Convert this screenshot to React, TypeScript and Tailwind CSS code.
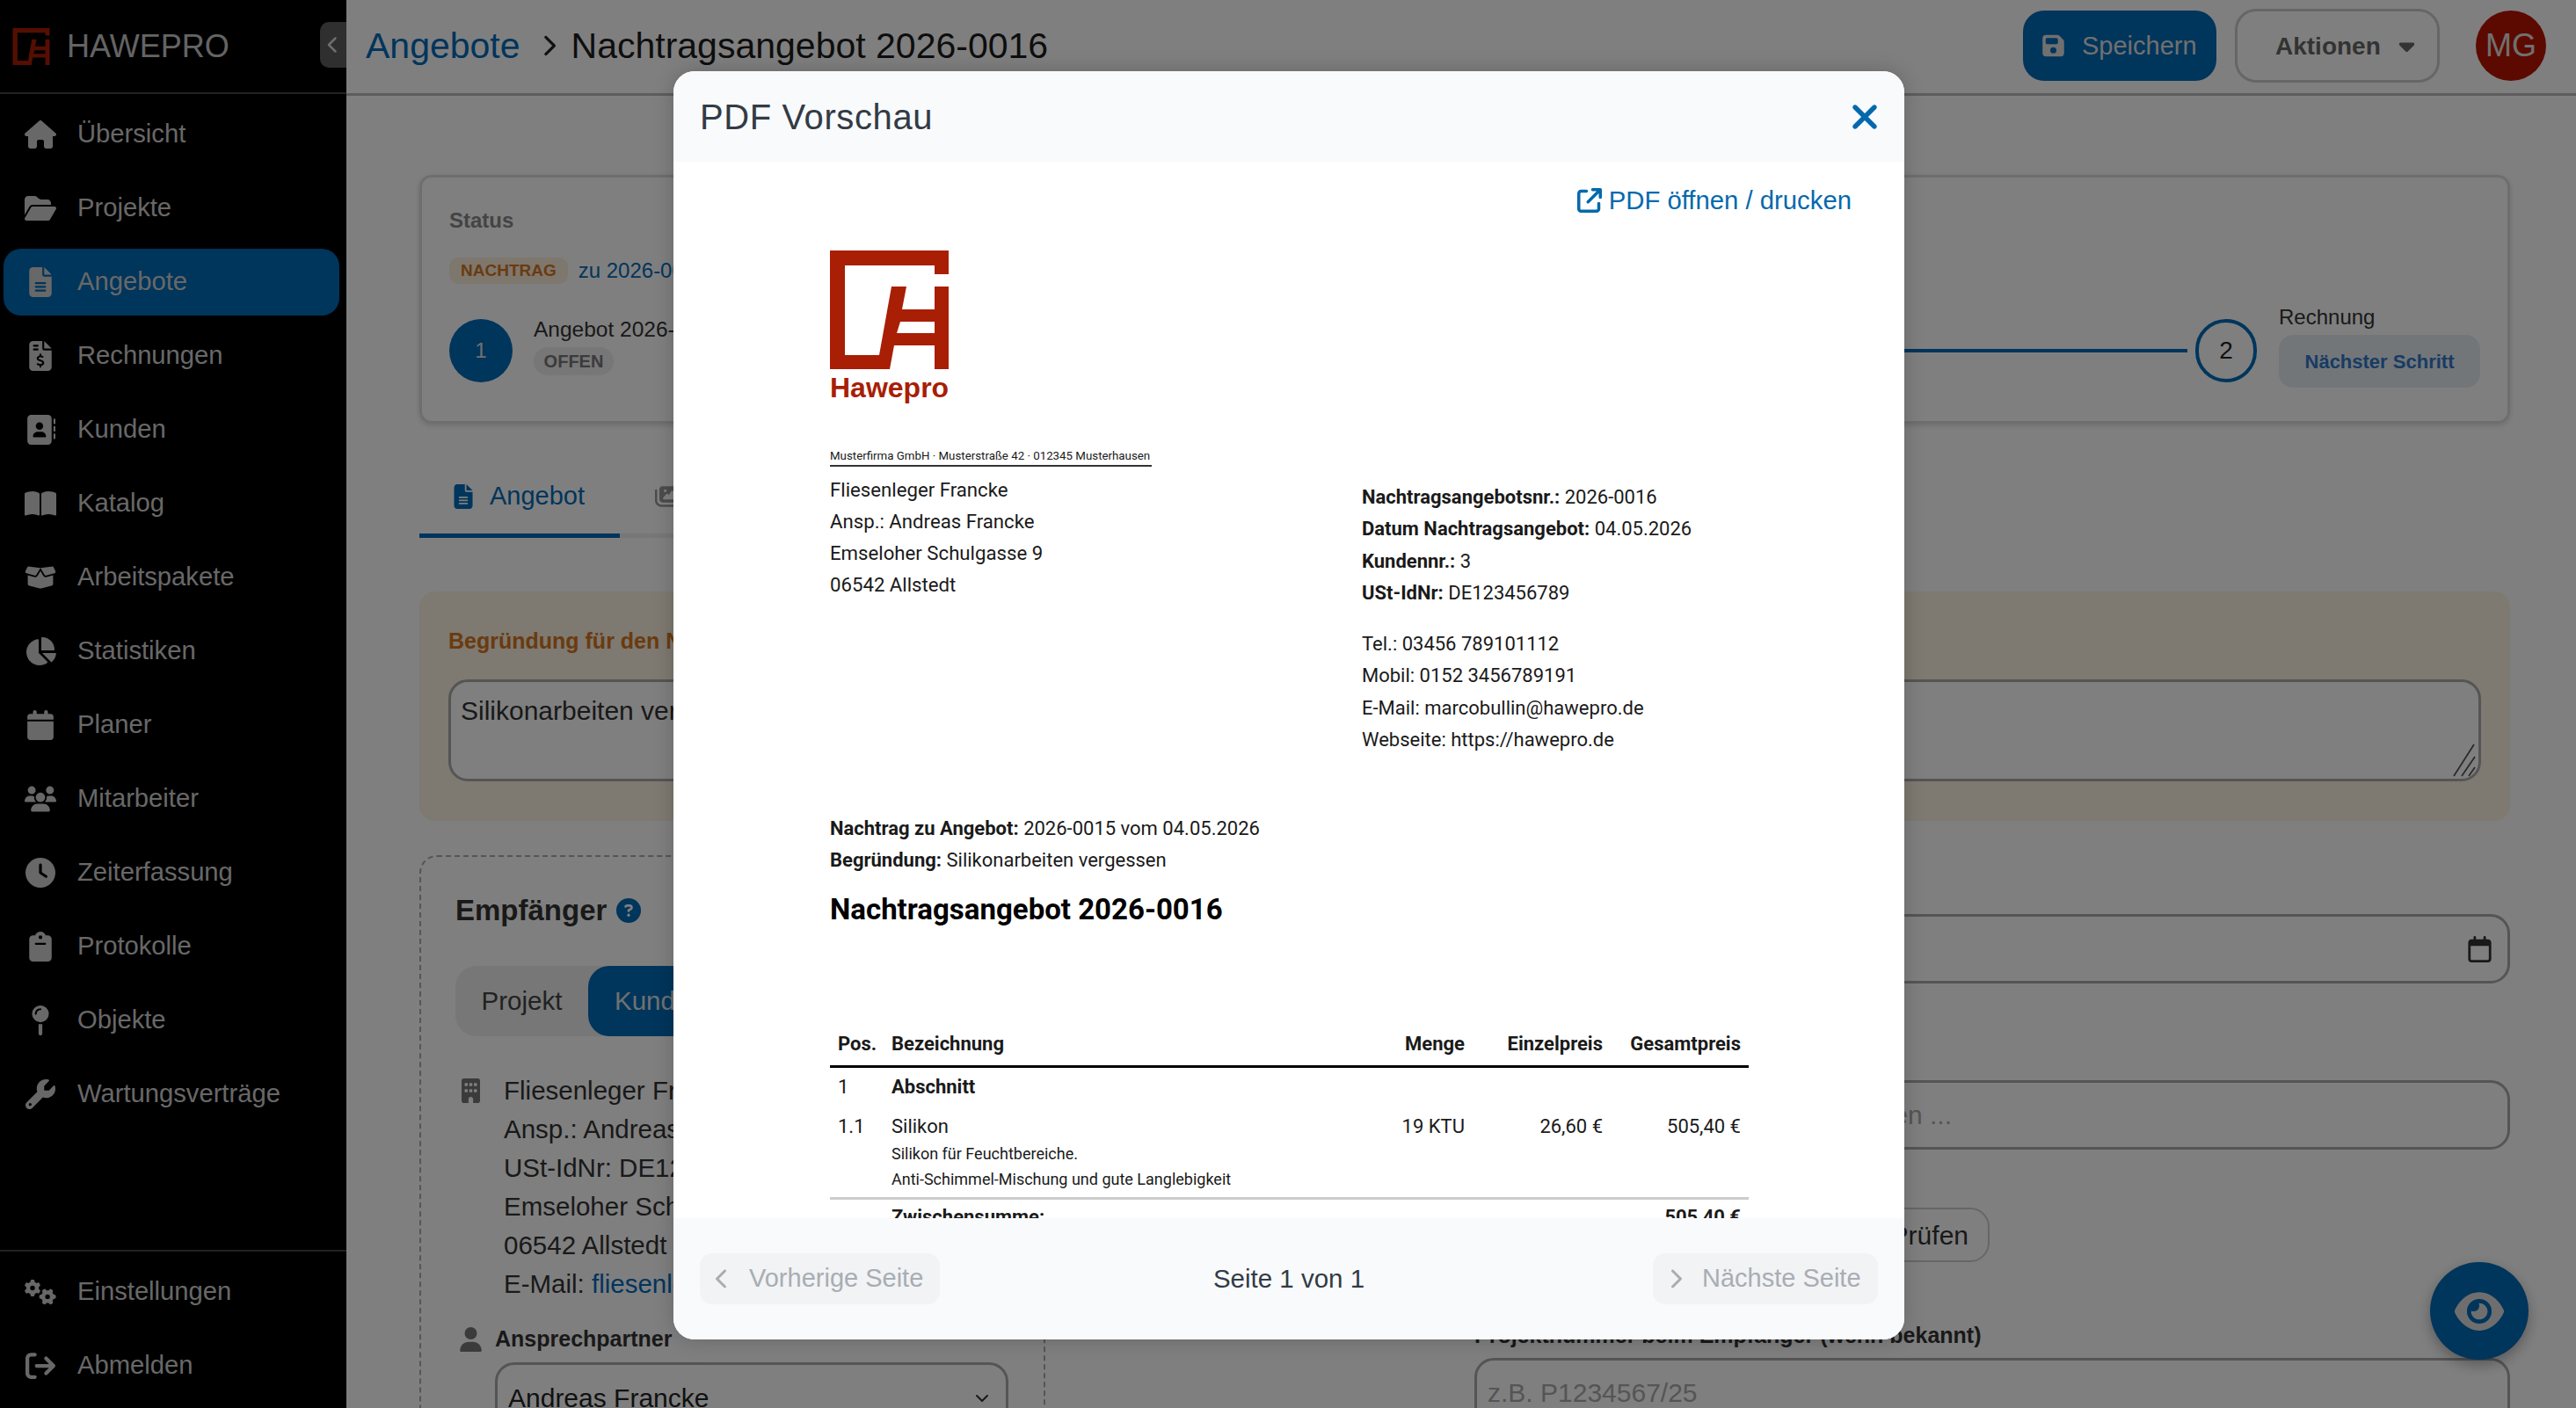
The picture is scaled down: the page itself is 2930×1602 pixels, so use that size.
import React from 'react';
import {
  FaHouse, FaFolderOpen, FaFileLines, FaFileInvoiceDollar, FaAddressBook, FaBookOpen, FaBoxOpen,
  FaChartPie, FaCalendar, FaUsers, FaClock, FaClipboard, FaMapPin, FaWrench, FaGears,
  FaArrowRightFromBracket, FaFloppyDisk, FaCaretDown, FaEye, FaBuilding, FaUser, FaXmark,
  FaCircleQuestion, FaChevronLeft, FaChevronRight, FaChevronDown, FaImages, FaRegCalendar,
  FaArrowUpRightFromSquare,
} from 'react-icons/fa6';

const mainNav = [
  { label: 'Übersicht', icon: FaHouse },
  { label: 'Projekte', icon: FaFolderOpen },
  { label: 'Angebote', icon: FaFileLines, active: true },
  { label: 'Rechnungen', icon: FaFileInvoiceDollar },
  { label: 'Kunden', icon: FaAddressBook },
  { label: 'Katalog', icon: FaBookOpen },
  { label: 'Arbeitspakete', icon: FaBoxOpen },
  { label: 'Statistiken', icon: FaChartPie },
  { label: 'Planer', icon: FaCalendar },
  { label: 'Mitarbeiter', icon: FaUsers },
  { label: 'Zeiterfassung', icon: FaClock },
  { label: 'Protokolle', icon: FaClipboard },
  { label: 'Objekte', icon: FaMapPin },
  { label: 'Wartungsverträge', icon: FaWrench },
];

const bottomNav = [
  { label: 'Einstellungen', icon: FaGears },
  { label: 'Abmelden', icon: FaArrowRightFromBracket },
];

const Logo = ({ className }: { className: string }) => (
  <svg viewBox="0 0 135 135" className={className}>
    <path
      fill="#a81f05"
      fillRule="evenodd"
      d="M0 0H135V27H119V17H17V119H56L70 41H87L82 67H119V41H135V135H119V108H73L68 135H0ZM80 81H119V94H76Z"
    />
  </svg>
);

const NavItem = ({ label, icon: Icon, active }: { label: string; icon: React.ElementType; active?: boolean }) => (
  <div className={`ml-[4px] mr-[8px] flex h-[76px] items-center rounded-[20px] pl-[24px] ${active ? 'bg-[#006ab8]' : ''}`}>
    <span className="flex w-[36px] justify-center text-[#d0d0d0]">
      <Icon className="h-[34px] w-[36px]" />
    </span>
    <span className="ml-[24px] text-[29.2px] text-[#d0d0d0]">{label}</span>
  </div>
);

const Sidebar = () => (
  <aside className="flex h-[1602px] w-[394px] shrink-0 flex-col bg-black">
    <div className="relative flex h-[107px] shrink-0 items-center border-b-2 border-[#444] pl-[14px]">
      <Logo className="h-[42px] w-[43px]" />
      <span className="ml-[19px] text-[36px] text-[#c8c8c8]">HAWEPRO</span>
      <div className="absolute right-0 top-[25px] flex h-[52px] w-[30px] items-center justify-center rounded-l-[10px] bg-[#5e5e5e] text-[#ddd]">
        <FaChevronLeft className="h-[20px] w-[14px]" />
      </div>
    </div>
    <nav className="flex flex-col gap-[8px] pt-[8px]">
      {mainNav.map((item) => (
        <NavItem key={item.label} {...item} />
      ))}
    </nav>
    <div className="mt-auto flex flex-col gap-[8px] border-t-2 border-[#444] pb-[10px] pt-[8px]">
      {bottomNav.map((item) => (
        <NavItem key={item.label} {...item} />
      ))}
    </div>
  </aside>
);

const TopBar = () => (
  <header className="flex h-[109px] shrink-0 items-center border-b-[3px] border-[#bbb] pb-[2px] pl-[22px] pr-[34px]">
    <span className="mt-[2px] text-[41px] text-[#006ab8]">Angebote</span>
    <FaChevronRight className="ml-[24px] h-[26px] w-[16px] text-[#222]" />
    <span className="ml-[18px] mt-[2px] text-[41px] text-[#1c1c1c]">Nachtragsangebot 2026-0016</span>
    <div className="ml-auto flex h-[80px] w-[220px] items-center rounded-[24px] bg-[#006ab8] pl-[22px] text-[#e0e0e0]">
      <FaFloppyDisk className="h-[28px] w-[25px]" />
      <span className="ml-[20px] mt-[2px] text-[29px]">Speichern</span>
    </div>
    <div className="ml-[21px] flex h-[84px] w-[233px] items-center rounded-[24px] border-[3px] border-[#ccc] pl-[43px] text-[#666]">
      <span className="mt-[2px] text-[28px] font-bold">Aktionen</span>
      <FaCaretDown className="ml-[17px] h-[28px] w-[25px]" />
    </div>
    <div className="ml-[41px] flex h-[80px] w-[80px] items-center justify-center rounded-full bg-[#b81400] text-[36px] text-[#e0e0e0]">
      MG
    </div>
  </header>
);

const StatusCard = () => (
  <section className="flex h-[283px] flex-col rounded-[14px] border-[3px] border-[#ddd] px-[31px] pt-[34px] shadow-[0_2px_6px_rgba(0,0,0,0.15)]">
    <div className="text-[24px] font-bold leading-[30px] text-[#888]">Status</div>
    <div className="mt-[27px] flex h-[30px] items-center">
      <span className="flex h-[30px] items-center rounded-[10px] bg-[#fdeedd] px-[13px] text-[19px] font-bold text-[#d4761f]">NACHTRAG</span>
      <span className="ml-[12px] text-[24px] text-[#006ab8]">zu 2026-0015</span>
    </div>
    <div className="mt-[40px] flex h-[72px] items-start">
      <div className="flex h-[72px] w-[72px] items-center justify-center rounded-full bg-[#006ab8] text-[24px] text-[#e0e0e0]">1</div>
      <div className="ml-[24px] -mt-[3px]">
        <div className="text-[24.5px] leading-[30px] text-[#333]">Angebot 2026-0015</div>
        <span className="mt-[5px] flex h-[32px] w-[91px] items-center justify-center rounded-full bg-[#eee] text-[20px] font-bold text-[#777]">OFFEN</span>
      </div>
      <div className="ml-[24px] mt-[34px] h-[4px] flex-1 bg-[#006ab8]" />
      <div className="ml-[9px] flex h-[72px] w-[70px] items-center justify-center rounded-full border-[4px] border-[#006ab8] text-[28px] text-[#222]">2</div>
      <div className="ml-[25px] -mt-[20px] w-[229px]">
        <div className="text-[24px] leading-[36px] text-[#333]">Rechnung</div>
        <span className="mt-[2px] flex h-[60px] items-center justify-center rounded-[16px] bg-[#e6ecf2] text-[22px] font-bold text-[#2f78c8]">Nächster Schritt</span>
      </div>
    </div>
  </section>
);

const Tabs = () => (
  <div className="mt-[38px] flex h-[92px] w-[1400px] border-b-[5px] border-[#eee]">
    <div className="-mb-[5px] flex w-[228px] items-center border-b-[5px] border-[#006ab8] pl-[39px] pt-[3px] text-[#006ab8]">
      <FaFileLines className="h-[28px] w-[22px]" />
      <span className="ml-[19px] text-[29px]">Angebot</span>
    </div>
    <div className="flex items-center pl-[40px] pt-[3px] text-[#999]">
      <FaImages className="h-[28px] w-[30px]" />
      <span className="ml-[16px] text-[29px]">Bilder</span>
    </div>
  </div>
);

const ReasonPanel = () => (
  <section className="mt-[61px] h-[261px] rounded-[18px] bg-[#fcf2e2] px-[33px] pt-[41px]">
    <div className="text-[25px] font-bold leading-[30px] text-[#d4761f]">Begründung für den Nachtrag</div>
    <div className="relative mt-[29px] h-[116px] rounded-[22px] border-[3px] border-[#aaa] bg-white px-[11px] pt-[15px] text-[30px] leading-[36px] text-[#333]">
      Silikonarbeiten vergessen
      <svg viewBox="0 0 28 40" className="absolute bottom-[1px] right-[2px] h-[40px] w-[28px] text-[#555]">
        <path d="M25 2 2 38M26 16 11 38M26 28 19 38" stroke="currentColor" strokeWidth="1.8" fill="none" />
      </svg>
    </div>
  </section>
);

const RecipientCard = () => (
  <section className="h-[700px] rounded-[20px] border-2 border-dashed border-[#aaa] pl-[39px] pt-[41px]">
    <div className="flex h-[40px] items-center">
      <span className="text-[33px] font-bold text-[#333]">Empfänger</span>
      <FaCircleQuestion className="ml-[11px] h-[28px] w-[28px] text-[#006ab8]" />
    </div>
    <div className="mt-[43px] flex h-[80px] w-[480px] rounded-[24px] bg-[#eee] text-[29.5px]">
      <span className="flex w-[151px] items-center justify-center text-[#444]">Projekt</span>
      <span className="flex flex-1 items-center rounded-[24px] bg-[#006ab8] pl-[30px] text-[#e0e0e0]">Kunde</span>
    </div>
    <div className="mt-[40px] flex text-[29.5px] leading-[44px] text-[#333]">
      <FaBuilding className="ml-[7px] mt-[8px] h-[28px] w-[21px] text-[#777]" />
      <div className="ml-[27px]">
        <div>Fliesenleger Francke</div>
        <div>Ansp.: Andreas Francke</div>
        <div>USt-IdNr: DE123456789</div>
        <div>Emseloher Schulgasse 9</div>
        <div>06542 Allstedt</div>
        <div>
          E-Mail: <span className="text-[#006ab8]">fliesenleger@francke.de</span>
        </div>
      </div>
    </div>
    <div className="mt-[21px] flex h-[40px] items-center">
      <FaUser className="ml-[5px] h-[28px] w-[25px] text-[#777]" />
      <span className="ml-[15px] text-[25px] font-bold text-[#333]">Ansprechpartner</span>
    </div>
    <div className="ml-[45px] mt-[6px] flex h-[80px] w-[584px] items-center rounded-[22px] border-[3px] border-[#aaa] pl-[12px] pr-[16px] text-[30px] text-[#222]">
      Andreas Francke
      <FaChevronDown className="ml-auto h-[16px] w-[22px] text-[#333]" />
    </div>
  </section>
);

const DetailColumn = () => (
  <div className="flex flex-col pt-[67px]">
    <div className="flex h-[79px] items-center justify-end rounded-[22px] border-[3px] border-[#aaa] pr-[18px]">
      <FaRegCalendar className="h-[30px] w-[27px] text-[#333]" />
    </div>
    <div className="mt-[110px] flex h-[79px] items-center rounded-[22px] border-[3px] border-[#aaa] pl-[12px] text-[30px] text-[#aaa]">
      <span className="w-[528px] whitespace-nowrap text-right">Kunden oder Lieferanten suchen ...</span>
    </div>
    <div className="mt-[66px] flex h-[62px] w-[586px] items-center justify-end rounded-[22px] border-2 border-[#ccc] pr-[22px] text-[30px] text-[#333]">
      Prüfen
    </div>
    <div className="mt-[67px] text-[25px] font-bold leading-[32px] text-[#333]">Projektnummer beim Empfänger (wenn bekannt)</div>
    <div className="mt-[10px] flex h-[79px] items-center rounded-[22px] border-[3px] border-[#aaa] pl-[12px] text-[30px] text-[#aaa]">
      z.B. P1234567/25
    </div>
  </div>
);

const Backdrop = () => (
  <main className="flex min-w-0 flex-1 flex-col">
    <TopBar />
    <div className="flex flex-col pl-[83px] pr-[75px] pt-[90px]">
      <StatusCard />
      <Tabs />
      <ReasonPanel />
      <div className="mt-[39px] grid grid-cols-[712px_1fr] gap-[488px]">
        <RecipientCard />
        <DetailColumn />
      </div>
    </div>
  </main>
);

const PdfPage = () => (
  <div className="h-full overflow-hidden pl-[178px] pr-[177px] font-['Roboto',sans-serif] text-[22px] text-[#1a1a1a]">
    <div className="h-[101px]" />
    <Logo className="h-[135px] w-[135px]" />
    <div className="mt-[4px] w-[135px] text-center font-['Liberation_Sans',sans-serif] text-[32px] font-bold leading-[34px] text-[#a81f05]">Hawepro</div>
    <div className="mt-[51px] w-[366px] border-b-2 border-[#333] text-[13.3px] leading-[20px]">Musterfirma GmbH · Musterstraße 42 · 012345 Musterhausen</div>
    <div className="flex leading-[36px]">
      <div className="mt-[8px] w-[605px] text-[22.2px]">
        <div>Fliesenleger Francke</div>
        <div>Ansp.: Andreas Francke</div>
        <div>Emseloher Schulgasse 9</div>
        <div>06542 Allstedt</div>
      </div>
      <div className="mt-[17px] leading-[36.3px]">
        <div><b>Nachtragsangebotsnr.:</b> 2026-0016</div>
        <div><b>Datum Nachtragsangebot:</b> 04.05.2026</div>
        <div><b>Kundennr.:</b> 3</div>
        <div><b>USt-IdNr:</b> DE123456789</div>
        <div className="mt-[22px]">Tel.: 03456 789101112</div>
        <div>Mobil: 0152 3456789191</div>
        <div>E-Mail: marcobullin@hawepro.de</div>
        <div>Webseite: https://hawepro.de</div>
      </div>
    </div>
    <div className="mt-[65px] leading-[36px]">
      <div><b>Nachtrag zu Angebot:</b> 2026-0015 vom 04.05.2026</div>
      <div><b>Begründung:</b> Silikonarbeiten vergessen</div>
    </div>
    <div className="mt-[16px] text-[33px] font-bold leading-[44px] text-black">Nachtragsangebot 2026-0016</div>
    <div className="mt-[105px]">
      <div className="grid h-[53px] grid-cols-[70px_1fr_158px_157px_157px] items-center border-b-[3px] border-black font-bold">
        <div className="pl-[9px]">Pos.</div>
        <div>Bezeichnung</div>
        <div className="pr-[9px] text-right">Menge</div>
        <div className="pr-[9px] text-right">Einzelpreis</div>
        <div className="pr-[9px] text-right">Gesamtpreis</div>
      </div>
      <div className="grid h-[43px] grid-cols-[70px_1fr] items-center">
        <div className="pl-[9px]">1</div>
        <div className="font-bold">Abschnitt</div>
      </div>
      <div className="grid grid-cols-[70px_1fr_158px_157px_157px] border-b-[3px] border-[#ccc] pb-[6px] pt-[7px] leading-[33px]">
        <div className="pl-[9px]">1.1</div>
        <div>
          Silikon
          <div className="text-[18px] leading-[29px]">Silikon für Feuchtbereiche.</div>
          <div className="text-[18px] leading-[29px]">Anti-Schimmel-Mischung und gute Langlebigkeit</div>
        </div>
        <div className="pr-[9px] text-right">19 KTU</div>
        <div className="pr-[9px] text-right">26,60 €</div>
        <div className="pr-[9px] text-right">505,40 €</div>
      </div>
      <div className="grid grid-cols-[70px_1fr_158px_157px_157px] pt-[2px] font-bold leading-[36px]">
        <div />
        <div>Zwischensumme:</div>
        <div />
        <div />
        <div className="pr-[9px] text-right">505,40 €</div>
      </div>
    </div>
  </div>
);

const PreviewModal = () => (
  <div className="absolute left-[766px] top-[81px] flex h-[1443px] w-[1400px] flex-col overflow-hidden rounded-[24px] bg-white shadow-[0_0_24px_rgba(0,0,0,0.2)]">
    <div className="flex h-[103px] shrink-0 items-center justify-between bg-[#f8fafc] pl-[30px] pr-[27px]">
      <span className="text-[40px] tracking-[0.6px] text-[#333b45]">PDF Vorschau</span>
      <FaXmark className="h-[44px] w-[36px] text-[#0369ad]" />
    </div>
    <div className="relative min-h-0 flex-1">
      <PdfPage />
      <div className="absolute right-[60px] top-[22px] flex items-center text-[#0369ad]">
        <FaArrowUpRightFromSquare className="h-[28px] w-[28px]" />
        <span className="ml-[8px] text-[29.3px]">PDF öffnen / drucken</span>
      </div>
    </div>
    <div className="grid h-[138px] shrink-0 grid-cols-[1fr_auto_1fr] items-center bg-[#f8fafc] pl-[30px] pr-[30px]">
      <div className="flex h-[58px] w-[273px] items-center rounded-[14px] bg-[#f1f3f5] pl-[18px] text-[29px] text-[#a8adb3]">
        <FaChevronLeft className="h-[24px] w-[15px]" />
        <span className="ml-[23px]">Vorherige Seite</span>
      </div>
      <span className="text-[29.5px] text-[#333b45]">Seite 1 von 1</span>
      <div className="flex h-[58px] w-[256px] items-center justify-self-end rounded-[14px] bg-[#f1f3f5] pl-[18px] text-[29px] text-[#a8adb3]">
        <FaChevronRight className="h-[24px] w-[15px]" />
        <span className="ml-[23px]">Nächste Seite</span>
      </div>
    </div>
  </div>
);

export default function App() {
  return (
    <div className="relative flex h-[1602px] w-[2930px] overflow-hidden bg-white font-['Liberation_Sans',Arial,sans-serif]">
      <Sidebar />
      <Backdrop />
      <div className="absolute left-[2764px] top-[1436px] flex h-[111px] w-[112px] items-center justify-center rounded-full bg-[#006ab8] text-[#ddd] shadow-[0_6px_16px_rgba(0,0,0,0.3)]">
        <FaEye className="h-[50px] w-[64px]" />
      </div>
      <div className="absolute inset-0 bg-black/50" />
      <PreviewModal />
    </div>
  );
}
